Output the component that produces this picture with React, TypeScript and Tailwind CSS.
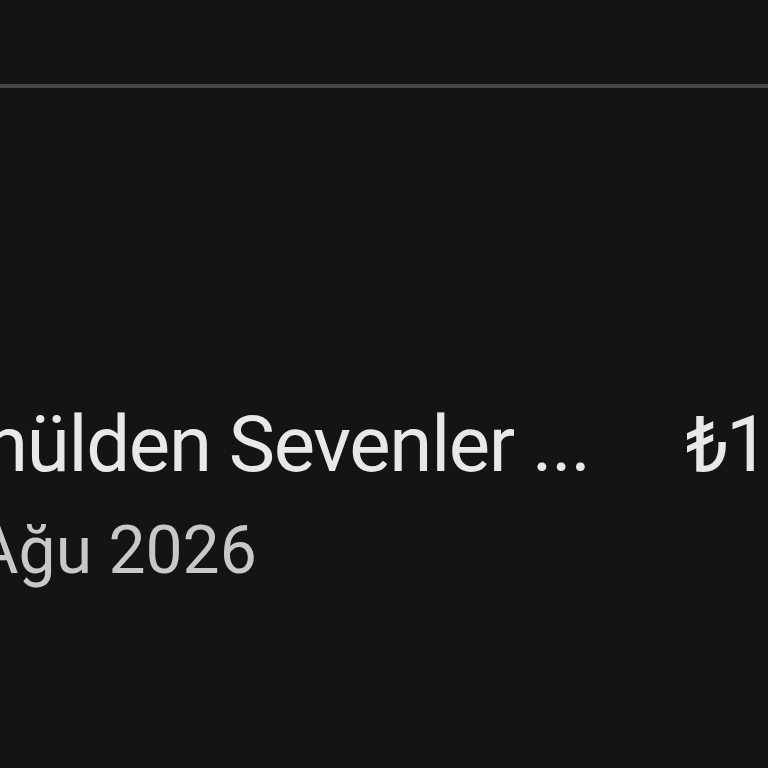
import React from 'react';

export default function App() {
  return (
    <div className="w-[768px] h-[768px] overflow-hidden bg-[#141414] font-['Roboto',sans-serif]">
      <div className="pt-[84px]">
        <div className="h-[4px] bg-[#474747]" />
      </div>
      <div className="flex items-start justify-between pt-[307px] ml-[-137px] mr-[-159px]">
        <div className="flex flex-col">
          <span className="pl-[27px] text-[78px] leading-[100px] tracking-[-1.3px] text-[#e8e8e8] whitespace-nowrap">Gönülden Sevenler ...</span>
          <span className="mt-[6px] pl-[22px] text-[66px] leading-[100px] text-[#c8c8c8] whitespace-nowrap">15 Ağu 2026</span>
        </div>
        <span className="pr-[20px] text-[78px] leading-[100px] tracking-[-3px] text-[#e8e8e8] whitespace-nowrap">₺1.250</span>
      </div>
    </div>
  );
}
